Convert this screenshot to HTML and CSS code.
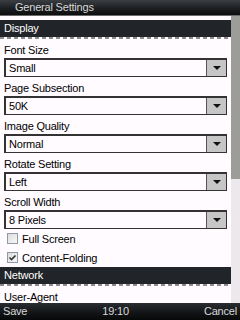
FILE: index.html
```html
<!DOCTYPE html>
<html lang="en">
<head>
    <meta charset="UTF-8">
    <meta name="viewport" content="width=device-width, initial-scale=1.0">
    <title>General Settings</title>
    <link rel="stylesheet" href="styles.css">
</head>
<body>
    <div class="screen">
        <div class="title-bar">General Settings</div>
        <div class="main">
            <div class="content">
                <div class="section-header">Display</div>
                <div class="field-label">Font Size</div>
                <div class="select"><span class="select-value">Small</span><span class="select-button"></span></div>
                <div class="field-label">Page Subsection</div>
                <div class="select"><span class="select-value">50K</span><span class="select-button"></span></div>
                <div class="field-label">Image Quality</div>
                <div class="select"><span class="select-value">Normal</span><span class="select-button"></span></div>
                <div class="field-label">Rotate Setting</div>
                <div class="select"><span class="select-value">Left</span><span class="select-button"></span></div>
                <div class="field-label">Scroll Width</div>
                <div class="select"><span class="select-value">8 Pixels</span><span class="select-button"></span></div>
                <div class="check-row"><span class="checkbox"></span>Full Screen</div>
                <div class="check-row">
                    <span class="checkbox">
                        <svg width="9" height="9" viewBox="0 0 9 9"><path d="M1.5 4.5 L3.5 6.5 L7.5 2.5" fill="none" stroke="#333" stroke-width="1.6"/></svg>
                    </span>Content-Folding
                </div>
                <div class="section-header">Network</div>
                <div class="field-label">User-Agent</div>
            </div>
            <div class="scrollbar"><div class="scroll-thumb"></div></div>
        </div>
        <div class="soft-keys">
            <span>Save</span>
            <span>19:10</span>
            <span>Cancel</span>
        </div>
    </div>
</body>
</html>
```

FILE: styles.css
```css
body {
    margin: 0;
    padding: 0;
    font-family: "Liberation Sans", Arial, sans-serif;
    font-size: 11px;
    letter-spacing: -0.2px;
}
.screen {
    width: 240px;
    height: 320px;
    display: flex;
    flex-direction: column;
    overflow: hidden;
    background-color: #fffbff;
}
.title-bar {
    height: 15px;
    line-height: 15px;
    padding-left: 15px;
    color: #d8d8d8;
    background: linear-gradient(#3a3e42, #1a1c1f 60%, #0c0d0f);
    border-bottom: 1px solid #6a6a6a;
}
.main {
    flex: 1;
    display: flex;
    overflow: hidden;
}
.content {
    flex: 1;
    padding-top: 4px;
    overflow: hidden;
}
.section-header {
    height: 17px;
    line-height: 17px;
    padding-left: 4px;
    color: #ffffff;
    background-color: #212428;
    border-bottom: 2px solid transparent;
    background-image: repeating-linear-gradient(90deg, #8c8c8c 0 4px, #fffbff 4px 7px);
    background-size: 100% 2px;
    background-position: 0 100%;
    background-repeat: no-repeat;
    background-origin: border-box;
}
.field-label {
    height: 19px;
    line-height: 23px;
    padding-left: 4px;
    color: #000000;
}
.select {
    display: flex;
    height: 17px;
    margin: 0 4px;
    border: 1px solid #333333;
    border-top-width: 2px;
    border-left-width: 2px;
    box-sizing: content-box;
    height: 16px;
}
.select-value {
    flex: 1;
    line-height: 16px;
    padding-left: 3px;
}
.select-button {
    width: 19px;
    background-color: #c6c6c6;
    border-left: 1px solid #555555;
    display: flex;
    align-items: center;
    justify-content: center;
}
.select-button::after {
    content: "";
    border-left: 4px solid transparent;
    border-right: 4px solid transparent;
    border-top: 4px solid #111111;
}
.check-row {
    height: 19px;
    display: flex;
    align-items: center;
    padding-left: 7px;
    gap: 4px;
}
.checkbox {
    width: 9px;
    height: 9px;
    border: 1px solid #8e9aa6;
    background: linear-gradient(135deg, #dcdcdc, #f8f8f8);
    display: flex;
    align-items: center;
    justify-content: center;
}
.scrollbar {
    width: 9px;
    background-color: #ece8ec;
}
.scroll-thumb {
    height: 163px;
    background-color: #9c9c98;
}
.soft-keys {
    height: 17px;
    line-height: 17px;
    display: flex;
    justify-content: space-between;
    padding: 0 3px;
    color: #d8d8d8;
    background: linear-gradient(#2a2d31, #111315 60%, #070808);
}
```
